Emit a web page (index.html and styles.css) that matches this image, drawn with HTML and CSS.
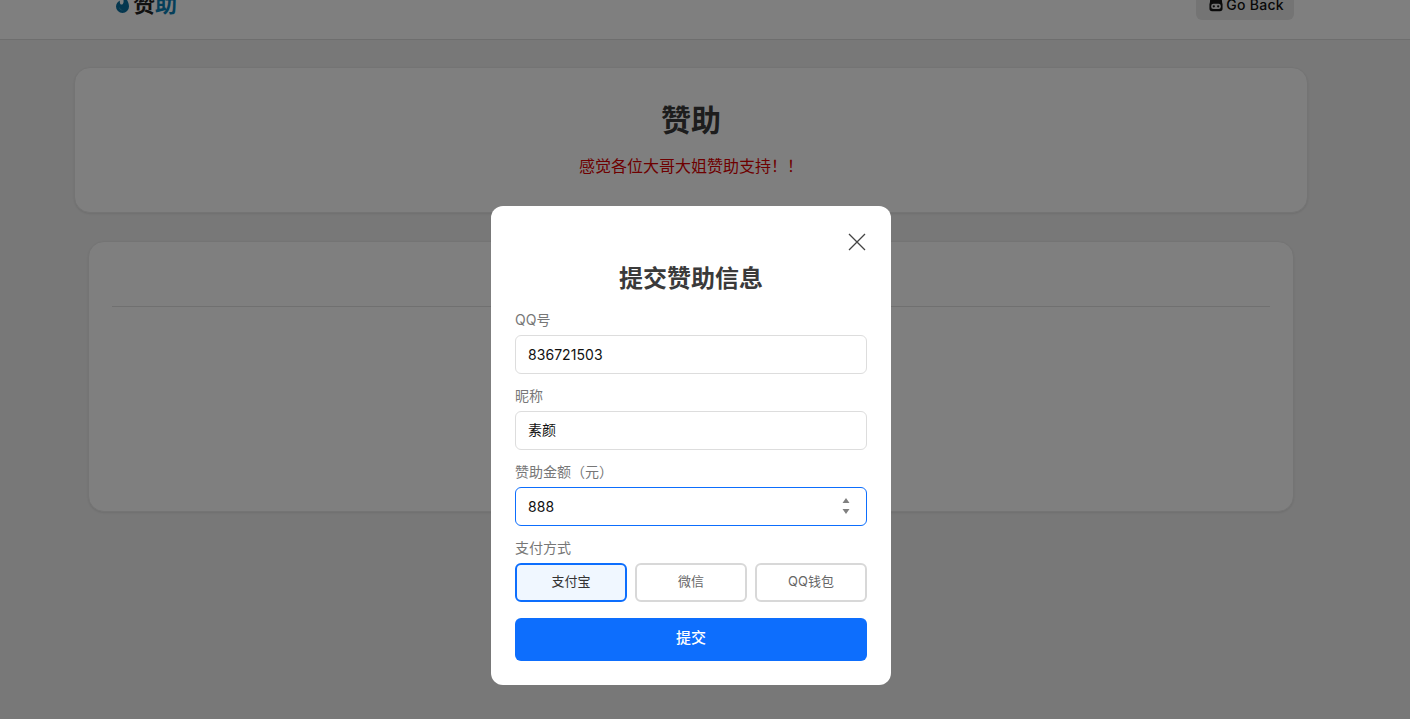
FILE: index.html
```html
<!DOCTYPE html>
<html lang="zh">
<head>
<meta charset="utf-8">
<title>赞助</title>
<link rel="stylesheet" href="styles.css">
</head>
<body>
<header class="topbar">
  <div class="brand">
    <svg class="drop" viewBox="0 0 14 20" width="14" height="20"><path fill="#0b6f9f" d="M8 0c1 4 5 7 5 12.500a6.500 6.500 0 0 1-13 0C0 9.500 2 7.500 4 6.500c-.5 2 0 3.500 1 4C6.500 11 8 9 7.500 6 7.200 4 7.300 2 8 0z"/><path fill="#6fb7d6" d="M3 13c.5 2.500 2.500 4 5 3.500-2.500-.2-4-1.500-5-3.500z"/></svg>
    <span class="brand-a">赞</span><span class="brand-b">助</span>
  </div>
  <a class="back">
    <svg class="gh" viewBox="0 0 16 16" width="14" height="14"><path fill="#151515" d="M1.500 0l3 1.500h7l3-1.500 .5 5 .5 2v5a3 3 0 0 1-3 3H3.500a3 3 0 0 1-3-3V7l.5-2z"/><rect x="2.500" y="6.500" width="11" height="6" rx="2.500" fill="#e4e4e4"/><circle cx="5.500" cy="9.500" r="1.300" fill="#151515"/><circle cx="10.500" cy="9.500" r="1.300" fill="#151515"/></svg>
    <span class="back-text">Go Back</span>
  </a>
</header>
<main class="content">
  <section class="hero">
    <h1>赞助</h1>
    <p>感觉各位大哥大姐赞助支持！！</p>
  </section>
  <section class="list">
    <div class="rule"></div>
  </section>
</main>
<div class="overlay">
  <form class="modal">
    <svg class="close" viewBox="0 0 18 18" width="18" height="18"><path d="M1 1l16 16M17 1L1 17" stroke="#444" stroke-width="1.300" fill="none"/></svg>
    <h2>提交赞助信息</h2>
    <label class="lbl">QQ号</label>
    <input class="field" type="text" value="836721503">
    <label class="lbl">昵称</label>
    <input class="field cjk" type="text" value="素颜">
    <label class="lbl">赞助金额（元）</label>
    <div class="num-wrap">
      <input class="field active" type="number" value="888">
      <svg class="spin" viewBox="0 0 8 16" width="8" height="16"><path fill="#808080" d="M4 0l3.500 5H.5zM4 16L.5 11h7z"/></svg>
    </div>
    <label class="lbl">支付方式</label>
    <div class="pays">
      <button type="button" class="pay on">支付宝</button>
      <button type="button" class="pay">微信</button>
      <button type="button" class="pay">QQ钱包</button>
    </div>
    <button type="button" class="submit">提交</button>
  </form>
</div>
</body>
</html>
```
FILE: styles.css
```css
* { box-sizing: border-box; }
html, body { margin: 0; height: 100%; overflow: hidden; }
body {
  background: #f0f0f0;
  font-family: Inter, "Noto Sans CJK SC", sans-serif;
  color: #333;
}
.topbar {
  height: 40px;
  overflow: hidden;
  background: #fff;
  border-bottom: 1px solid #dcdcdc;
  padding: 0 116px 0 116px;
  display: flex;
  justify-content: space-between;
  align-items: flex-end;
}
.brand {
  display: flex;
  align-items: center;
  height: 30px;
  margin-bottom: 20px;
  font-size: 22px;
  font-weight: 700;
  line-height: 30px;
}
.drop { margin-right: 3px; flex: none; }
.brand-a { color: #222; }
.brand-b { color: #0b7fb5; }
.back {
  display: flex;
  align-items: center;
  gap: 3px;
  height: 40px;
  margin-bottom: 19px;
  padding: 9px 10px 0 13px;
  background: #e8e8e8;
  border-radius: 6px;
  font-size: 14px;
  font-weight: 500;
  color: #111;
  white-space: nowrap;
}
.back-text { letter-spacing: .3px; }
.content {
  width: 1382px;
  display: flex;
  flex-direction: column;
  align-items: center;
  padding-top: 27px;
}
.hero {
  width: 1234px;
  height: 146px;
  background: #fff;
  border: 1px solid #e8e8e8;
  border-radius: 16px;
  box-shadow: 0 1px 2px rgba(0,0,0,.08);
  text-align: center;
  padding-top: 32px;
}
.hero h1 {
  margin: 0;
  font-size: 30px;
  line-height: 40px;
  font-weight: 700;
  color: #3a3a3a;
}
.hero p {
  margin: 14px 0 0;
  font-size: 16px;
  line-height: 24px;
  color: #d00;
}
.list {
  width: 1206px;
  height: 271px;
  margin-top: 28px;
  background: #fff;
  border: 1px solid #e8e8e8;
  border-radius: 16px;
  box-shadow: 0 1px 2px rgba(0,0,0,.08);
  padding: 64px 23px 0;
}
.rule { height: 1px; background: #e0e0e0; }
.overlay {
  position: fixed;
  inset: 0;
  background: rgba(0,0,0,.5);
}
.modal {
  position: absolute;
  left: 491px;
  top: 206px;
  width: 400px;
  height: 479px;
  background: #fff;
  border-radius: 12px;
  padding: 57px 24px 24px;
  display: flex;
  flex-direction: column;
}
.close { position: absolute; right: 25px; top: 27px; }
.modal h2 {
  margin: 0 0 14px;
  height: 32px;
  font-size: 24px;
  line-height: 32px;
  font-weight: 700;
  text-align: center;
  color: #3a3a3a;
}
.lbl {
  font-size: 14px;
  line-height: 21px;
  color: #777;
  height: 21px;
  margin-bottom: 5px;
}
.field {
  width: 352px;
  height: 39px;
  flex: none;
  border: 1px solid #ddd;
  border-radius: 6px;
  padding: 0 12px;
  margin-bottom: 11px;
  font: 14px Inter, "Noto Sans CJK SC", sans-serif;
  letter-spacing: .05px;
  color: #111;
  background: #fff;
  outline: none;
}
.cjk { font-family: "Noto Sans CJK SC", sans-serif; padding-bottom: 4px; }
.active { border-color: #0d6efd; appearance: textfield; }
.num-wrap { position: relative; display: flex; flex: none; }
.spin { position: absolute; left: 327px; top: 11px; }
.pays { display: flex; gap: 8px; margin-bottom: 16px; }
.pay {
  flex: 1;
  height: 39px;
  border: 2px solid #d8d8d8;
  border-radius: 6px;
  background: #fff;
  font: 13px Inter, "Noto Sans CJK SC", sans-serif;
  color: #666;
  padding: 0 0 4px;
}
.pay.on { border-color: #0d6efd; background: #f0f7ff; color: #333; }
.submit {
  height: 43px;
  flex: none;
  border: 0;
  border-radius: 6px;
  background: #0d6efd;
  color: #fff;
  font: 500 15px Inter, "Noto Sans CJK SC", sans-serif;
  padding: 0 0 7px;
}
```
